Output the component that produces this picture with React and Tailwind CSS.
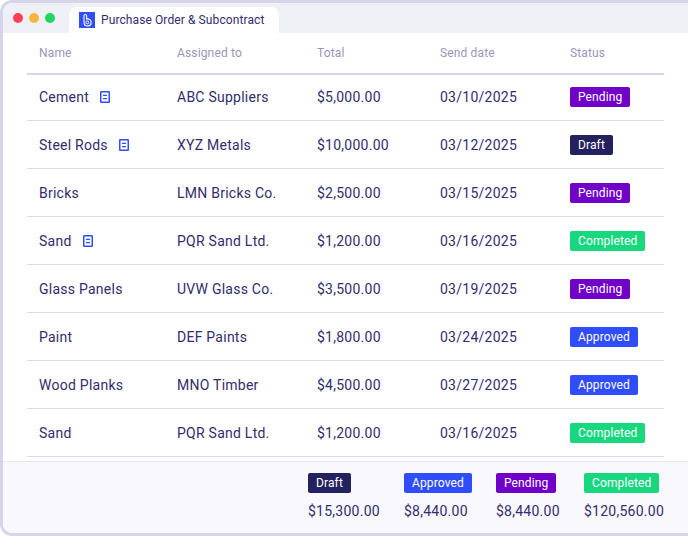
import React from "react";

const badgeStyles = {
  Pending: "bg-[#7000c8]",
  Draft: "bg-[#24215f]",
  Completed: "bg-[#19d77f]",
  Approved: "bg-[#2f4dfb]",
};

const rows = [
  { name: "Cement", doc: true, to: "ABC Suppliers", total: "$5,000.00", date: "03/10/2025", status: "Pending" },
  { name: "Steel Rods", doc: true, to: "XYZ Metals", total: "$10,000.00", date: "03/12/2025", status: "Draft" },
  { name: "Bricks", to: "LMN Bricks Co.", total: "$2,500.00", date: "03/15/2025", status: "Pending" },
  { name: "Sand", doc: true, to: "PQR Sand Ltd.", total: "$1,200.00", date: "03/16/2025", status: "Completed" },
  { name: "Glass Panels", to: "UVW Glass Co.", total: "$3,500.00", date: "03/19/2025", status: "Pending" },
  { name: "Paint", to: "DEF Paints", total: "$1,800.00", date: "03/24/2025", status: "Approved" },
  { name: "Wood Planks", to: "MNO Timber", total: "$4,500.00", date: "03/27/2025", status: "Approved" },
  { name: "Sand", to: "PQR Sand Ltd.", total: "$1,200.00", date: "03/16/2025", status: "Completed" },
];

const totals = [
  { status: "Draft", value: "$15,300.00", width: "w-[96px]" },
  { status: "Approved", value: "$8,440.00", width: "w-[92px]" },
  { status: "Pending", value: "$8,440.00", width: "w-[88px]" },
  { status: "Completed", value: "$120,560.00", width: "w-[80px]" },
];

const Badge = ({ status }) => (
  <span className={`inline-flex h-5 items-center rounded-[2px] px-2 text-[12px] leading-none tracking-[0.13px] text-white ${badgeStyles[status]}`}>
    {status}
  </span>
);

const DocIcon = () => (
  <svg width="10" height="12" viewBox="0 0 10 12" className="ml-[11px] shrink-0">
    <rect x="0.75" y="0.75" width="8.5" height="10.5" rx="0.5" fill="none" stroke="#2f4dfb" strokeWidth="1.5" />
    <path d="M3 4.4H7M3 7.6H7" stroke="#2f4dfb" strokeWidth="1.2" fill="none" />
  </svg>
);

const App = () => {
  return (
    <div className="h-[536px] w-[688px] overflow-hidden bg-white font-['Roboto',sans-serif]">
      <div className="flex h-full flex-col overflow-hidden rounded-l-[12px] border-y-[3px] border-l-[3px] border-[#d5d4e8]">
        {/* Title bar */}
        <div className="flex h-[30px] shrink-0 items-end bg-[#eff0f6]">
          <div className="flex h-[30px] w-[66px] items-center gap-[6px] pb-[1px] pl-[10px]">
            <span className="h-[10px] w-[10px] rounded-full bg-[#fb4057]" />
            <span className="h-[10px] w-[10px] rounded-full bg-[#fdb53e]" />
            <span className="h-[10px] w-[10px] rounded-full bg-[#1ed760]" />
          </div>
          <div className="flex h-[26px] w-[210px] items-center rounded-t-[8px] bg-white pl-[10px]">
            <svg width="16" height="16" viewBox="0 0 16 16" className="shrink-0">
              <rect width="16" height="16" fill="#2f4dfb" />
              <path d="M5 10V3.8A1.3 1.3 0 0 1 7.6 3.8V7C10 6.6 12.4 8 12.2 10.6C12 13 10 14 8.2 14C6.2 14 5 12.4 5 10Z" fill="none" stroke="white" strokeWidth="1.1" />
              <circle cx="8.3" cy="10.4" r="1.5" fill="none" stroke="white" strokeWidth="1" />
            </svg>
            <span className="ml-[6px] whitespace-nowrap text-[12px] tracking-[0.1px] text-[#322d6c]">Purchase Order &amp; Subcontract</span>
          </div>
        </div>

        {/* Table */}
        <div className="min-h-0 flex-1 pl-[24px] pr-[24px]">
          <div className="grid h-[42px] grid-cols-[138px_140px_123px_130px_1fr] items-center border-b-2 border-[#d5d4e8] pl-[12px] text-[12px] tracking-[0.15px] text-[#9896ba]">
            <span>Name</span>
            <span>Assigned to</span>
            <span>Total</span>
            <span>Send date</span>
            <span>Status</span>
          </div>
          <div className="-mt-[2px]">
            {rows.map((row, i) => (
              <div key={i} className="grid h-[48px] grid-cols-[138px_140px_123px_130px_1fr] items-center border-b border-[#dcdbee] pl-[12px] text-[14px] tracking-[0.25px] text-[#322d6c]">
                <span className="flex items-center pt-[1px]">
                  {row.name}
                  {row.doc && <DocIcon />}
                </span>
                <span className="pt-[1px]">{row.to}</span>
                <span className="pt-[1px]">{row.total}</span>
                <span className="pt-[1px]">{row.date}</span>
                <span className="flex pt-[1px]">
                  <Badge status={row.status} />
                </span>
              </div>
            ))}
          </div>
        </div>

        {/* Totals */}
        <div className="flex h-[72px] shrink-0 justify-end border-t border-[#e6e6f0] bg-[#f8f8fd] pr-[24px] pt-[11px]">
          {totals.map((t) => (
            <div key={t.status} className={`flex flex-col items-start gap-[8px] ${t.width}`}>
              <Badge status={t.status} />
              <span className="whitespace-nowrap text-[14px] tracking-[0.25px] text-[#322d6c]">{t.value}</span>
            </div>
          ))}
        </div>
      </div>
    </div>
  );
};

export default App;
